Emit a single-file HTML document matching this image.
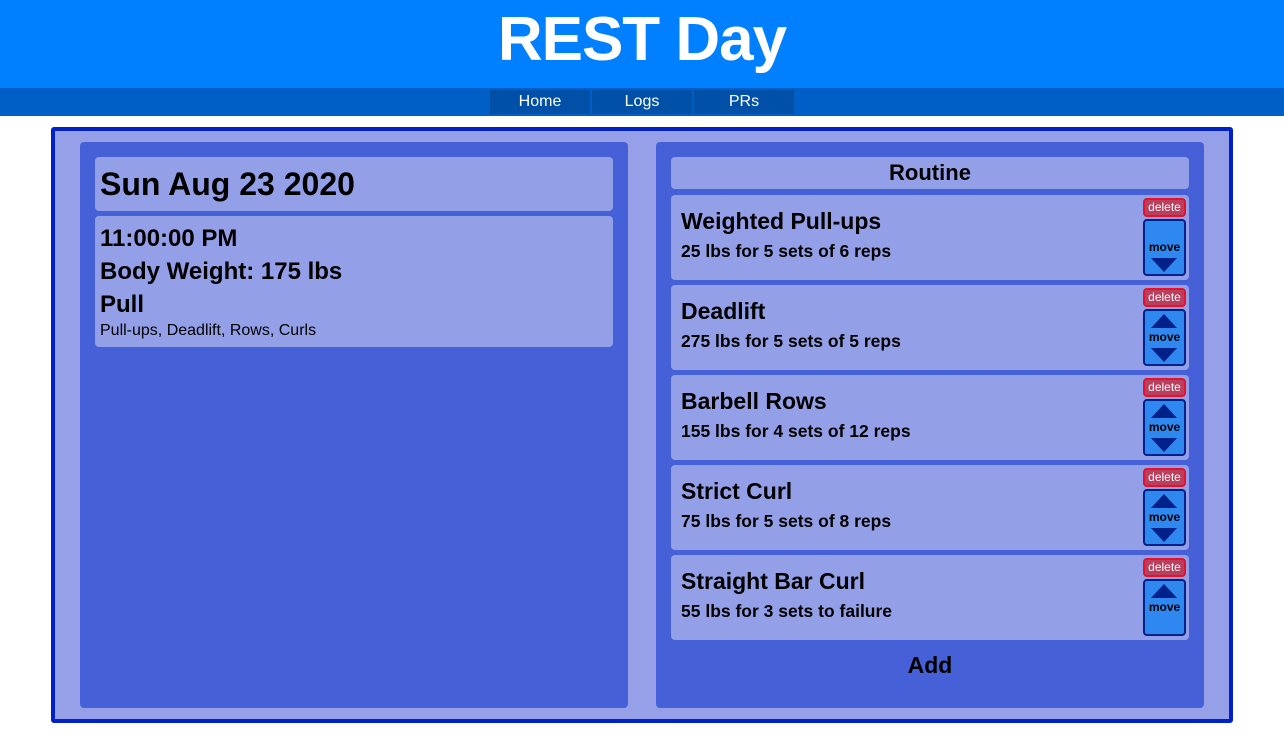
<!DOCTYPE html>
<html><head><style>
*{margin:0;padding:0;box-sizing:border-box}
body{width:1284px;height:753px;background:#fff;font-family:"Liberation Sans",sans-serif;position:relative;overflow:hidden}
.hdr{position:absolute;left:0;top:0;width:1284px;height:88px;background:#0080ff;color:#fff;text-align:center;font-size:62px;font-weight:bold;line-height:80px;letter-spacing:-1px}
.nav{position:absolute;left:0;top:88px;width:1284px;height:28px;background:#005fc6}
.nb{position:absolute;top:2px;width:100px;height:24px;background:#0050a8;color:#fff;font-size:16px;text-align:center;line-height:24px}
.box{position:absolute;left:51px;top:127px;width:1182px;height:596px;border:4px solid #0020c8;background:#95a0e8;border-radius:3px}
.pan{position:absolute;top:142px;width:548px;height:566px;background:#4660d8;border-radius:4px}
.card{position:absolute;background:#93a0e8;border-radius:4px;color:#000}
.b{font-weight:bold}
.it h3{position:absolute;left:10px;top:13px;font-size:23px;font-weight:bold}
.it p{position:absolute;left:10px;top:46px;font-size:17.5px;font-weight:bold}
.del{position:absolute;left:472px;top:3px;width:43px;height:19px;background:#b8405e;border:2px solid #e8102a;border-radius:4px;color:#fff;font-size:12px;text-align:center;line-height:15px}
.mv{position:absolute;left:472px;top:24px;width:43px;height:57px;background:#2f88f0;border:2px solid #00208a;border-radius:4px;font-size:12px;font-weight:bold;text-align:center}
.mv span{position:absolute;left:0;width:39px;top:19px}
.up{position:absolute;left:6px;top:3px;width:0;height:0;border-left:13px solid transparent;border-right:13px solid transparent;border-bottom:14px solid #00208a}
.dn{position:absolute;left:6px;top:37px;width:0;height:0;border-left:13px solid transparent;border-right:13px solid transparent;border-top:14px solid #00208a}
</style></head><body>
<div class="hdr">REST Day</div>
<div class="nav"><div class="nb" style="left:490px">Home</div><div class="nb" style="left:592px">Logs</div><div class="nb" style="left:694px">PRs</div></div>
<div class="box"></div>
<div class="pan" style="left:80px"></div>
<div class="pan" style="left:656px"></div>
<div class="card" style="left:95px;top:157px;width:518px;height:54px"><div class="b" style="position:absolute;left:5px;top:9px;font-size:32px">Sun Aug 23 2020</div></div>
<div class="card" style="left:95px;top:216px;width:518px;height:131px">
<div class="b" style="position:absolute;left:5px;top:9px;font-size:24px">11:00:00 PM</div>
<div class="b" style="position:absolute;left:5px;top:42px;font-size:24px">Body Weight: 175 lbs</div>
<div class="b" style="position:absolute;left:5px;top:75px;font-size:24px">Pull</div>
<div style="position:absolute;left:5px;top:106px;font-size:16px">Pull-ups, Deadlift, Rows, Curls</div>
</div>
<div class="card" style="left:671px;top:157px;width:518px;height:32px;text-align:center;font-size:22px;font-weight:bold;line-height:32px">Routine</div>
<div class="card it" style="left:671px;top:195px;width:518px;height:85px"><h3>Weighted Pull-ups</h3><p>25 lbs for 5 sets of 6 reps</p><div class="del">delete</div><div class="mv"><span>move</span><div class="dn"></div></div></div>
<div class="card it" style="left:671px;top:285px;width:518px;height:85px"><h3>Deadlift</h3><p>275 lbs for 5 sets of 5 reps</p><div class="del">delete</div><div class="mv"><div class="up"></div><span>move</span><div class="dn"></div></div></div>
<div class="card it" style="left:671px;top:375px;width:518px;height:85px"><h3>Barbell Rows</h3><p>155 lbs for 4 sets of 12 reps</p><div class="del">delete</div><div class="mv"><div class="up"></div><span>move</span><div class="dn"></div></div></div>
<div class="card it" style="left:671px;top:465px;width:518px;height:85px"><h3>Strict Curl</h3><p>75 lbs for 5 sets of 8 reps</p><div class="del">delete</div><div class="mv"><div class="up"></div><span>move</span><div class="dn"></div></div></div>
<div class="card it" style="left:671px;top:555px;width:518px;height:85px"><h3>Straight Bar Curl</h3><p>55 lbs for 3 sets to failure</p><div class="del">delete</div><div class="mv"><div class="up"></div><span>move</span></div></div>
<div class="b" style="position:absolute;left:656px;width:548px;top:652px;text-align:center;font-size:23px">Add</div>
</body></html>
